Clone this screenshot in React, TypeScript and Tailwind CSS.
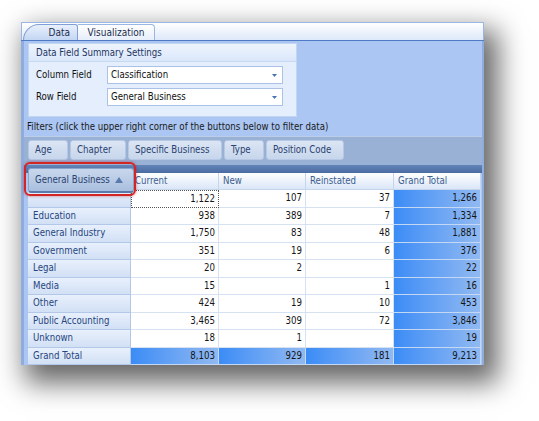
import React from "react";

const rows: string[][] = [
  ["", "1,122", "107", "37", "1,266"],
  ["Education", "938", "389", "7", "1,334"],
  ["General Industry", "1,750", "83", "48", "1,881"],
  ["Government", "351", "19", "6", "376"],
  ["Legal", "20", "2", "", "22"],
  ["Media", "15", "", "1", "16"],
  ["Other", "424", "19", "10", "453"],
  ["Public Accounting", "3,465", "309", "72", "3,846"],
  ["Unknown", "18", "1", "", "19"],
  ["Grand Total", "8,103", "929", "181", "9,213"],
];

const filters: { label: string; w: string }[] = [
  { label: "Age", w: "w-[40px]" },
  { label: "Chapter", w: "w-[56px]" },
  { label: "Specific Business", w: "w-[94px]" },
  { label: "Type", w: "w-[40px]" },
  { label: "Position Code", w: "w-[78px]" },
];

function Arrow() {
  return (
    <svg width="5" height="3" viewBox="0 0 5 3" className="shrink-0">
      <path d="M0 0H5L2.5 3Z" fill="#4a72b8" />
    </svg>
  );
}

function Combo({ value }: { value: string }) {
  return (
    <div className="w-[176px] h-[18px] border border-[#abc2e6] bg-white pl-[3px] pr-[5px] flex items-center justify-between text-[#111]">
      <span>{value}</span>
      <Arrow />
    </div>
  );
}

export default function App() {
  return (
    <div className="w-[539px] h-[421px] bg-white overflow-hidden pt-[22px] pl-[21px] font-['DejaVu_Sans_Condensed','Liberation_Sans',sans-serif] text-[9.6px] leading-none">
      <div className="w-[463px] h-[343px] flex flex-col bg-[#abc6f2] shadow-[9px_13px_26px_5px_rgba(0,0,0,0.6)]">
        {/* tab strip */}
        <div className="h-[18px] flex items-end pl-[1px] bg-gradient-to-b from-white to-[#dde8f9] border-t border-x border-[#9ab6e4]">
          <div className="h-[16px] w-[55px] rounded-tl-[16px] rounded-tr-[3px] border border-b-0 border-[#7f9fd6] bg-gradient-to-b from-[#e9f0fc] to-[#c3d6f3] flex items-center justify-end pr-[7px] text-[10px] text-[#1b2c4e]">
            Data
          </div>
          <div className="h-[16px] w-[77px] rounded-tr-[4px] border border-l-0 border-b-0 border-[#9ab6e4] bg-gradient-to-b from-white to-[#e6eefa] flex items-center justify-center text-[10px] text-[#1b2c4e]">
            Visualization
          </div>
        </div>
        <div className="h-[1px] bg-[#4f7bc6]" />

        {/* content */}
        <div className="flex-1 flex flex-col border-l-[3px] border-r-[2px] border-[#8eacdd] pl-[4px]">
          {/* settings box */}
          <div className="mt-[2px] w-[269px] h-[74px] border border-[#c2d5f1] bg-[#e5eefc] flex flex-col">
            <div className="h-[18px] shrink-0 bg-gradient-to-b from-[#eef4fd] to-[#dae7fa] border-b border-[#c6d8f2] pl-[7px] flex items-center text-[#1d3461]">
              Data Field Summary Settings
            </div>
            <div className="pt-[4px] pl-[7px] flex flex-col gap-[4px]">
              <div className="flex items-center">
                <span className="w-[71px] text-[#111]">Column Field</span>
                <Combo value="Classification" />
              </div>
              <div className="flex items-center">
                <span className="w-[71px] text-[#111]">Row Field</span>
                <Combo value="General Business" />
              </div>
            </div>
          </div>

          {/* filters text */}
          <div className="h-[19px] flex items-center -ml-[1px] text-[#1a1a1a]">
            Filters (click the upper right corner of the buttons below to filter data)
          </div>

          {/* filter band */}
          <div className="h-[29px] -ml-[4px] pl-[4px] pt-[3px] bg-[#98b1d5] border-t border-[#bccde9] flex gap-[2px]">
            {filters.map((f) => (
              <div
                key={f.label}
                className={`${f.w} h-[20px] rounded-[3px] border border-[#b6c8e3] bg-gradient-to-b from-[#dbe5f4] to-[#c7d6ec] pl-[6px] flex items-center text-[#2a4270]`}
              >
                {f.label}
              </div>
            ))}
          </div>

          {/* dark bar */}
          <div className="h-[8px] -ml-[4px] bg-gradient-to-b from-[#6384b8] to-[#4a6ca2]" />

          {/* table */}
          <div className="relative">
            <div className="absolute -left-[4px] -top-[11px] w-[112px] h-[34px] rounded-[6px] border-2 border-[#d42424] shadow-[0_0_3px_rgba(200,0,0,0.5)] z-20 pointer-events-none" />
            <div className="grid grid-cols-[103px_88px_87px_88px_87px]">
              {/* header */}
              <div className="h-[17px] relative bg-[#4a6ca2]">
                <div className="absolute left-0 -top-[5px] w-[106px] h-[25px] z-10 rounded-[3px] border border-[#8aa4cc] border-b-[2px] border-b-[#5b79aa] bg-gradient-to-b from-[#c9d7ec] to-[#a9bfdf] pl-[6px] flex items-center gap-[5px] text-[#2a4270]">
                  <span>General Business</span>
                  <svg width="8" height="6" viewBox="0 0 8 6">
                    <path d="M0 6L4 0L8 6Z" fill="#5a7bb0" />
                  </svg>
                </div>
              </div>
              {["Current", "New", "Reinstated", "Grand Total"].map((h) => (
                <div
                  key={h}
                  className="h-[17px] bg-gradient-to-b from-white to-[#dae6f7] border-r border-b border-[#c5d5ec] pl-[4px] flex items-center text-[#3c5d90]"
                >
                  {h}
                </div>
              ))}

              {rows.map((r, i) => {
                const isTotal = i === rows.length - 1;
                return (
                  <React.Fragment key={i}>
                    <div className="h-[17.5px] bg-gradient-to-b from-[#e8f0fc] to-[#d2e0f5] border-b border-r border-[#b3c8e8] pl-[5px] flex items-center text-[#26467e]">
                      {r[0]}
                    </div>
                    {r.slice(1).map((v, j) => {
                      const gt = j === 3 || isTotal;
                      const focus = i === 0 && j === 0;
                      let cls =
                        "h-[17.5px] pr-[3px] flex items-center justify-end text-[#151515] ";
                      if (gt) {
                        cls +=
                          "bg-gradient-to-r from-[#3a8cf6] to-[#91b9f1] border-b border-r border-[#c4d8f4]";
                      } else if (focus) {
                        cls += "bg-white border border-dotted border-[#555]";
                      } else {
                        cls += "bg-white border-b border-r border-[#d6e2f2]";
                      }
                      return (
                        <div key={j} className={cls}>
                          {v}
                        </div>
                      );
                    })}
                  </React.Fragment>
                );
              })}
            </div>
          </div>
        </div>
      </div>
    </div>
  );
}
